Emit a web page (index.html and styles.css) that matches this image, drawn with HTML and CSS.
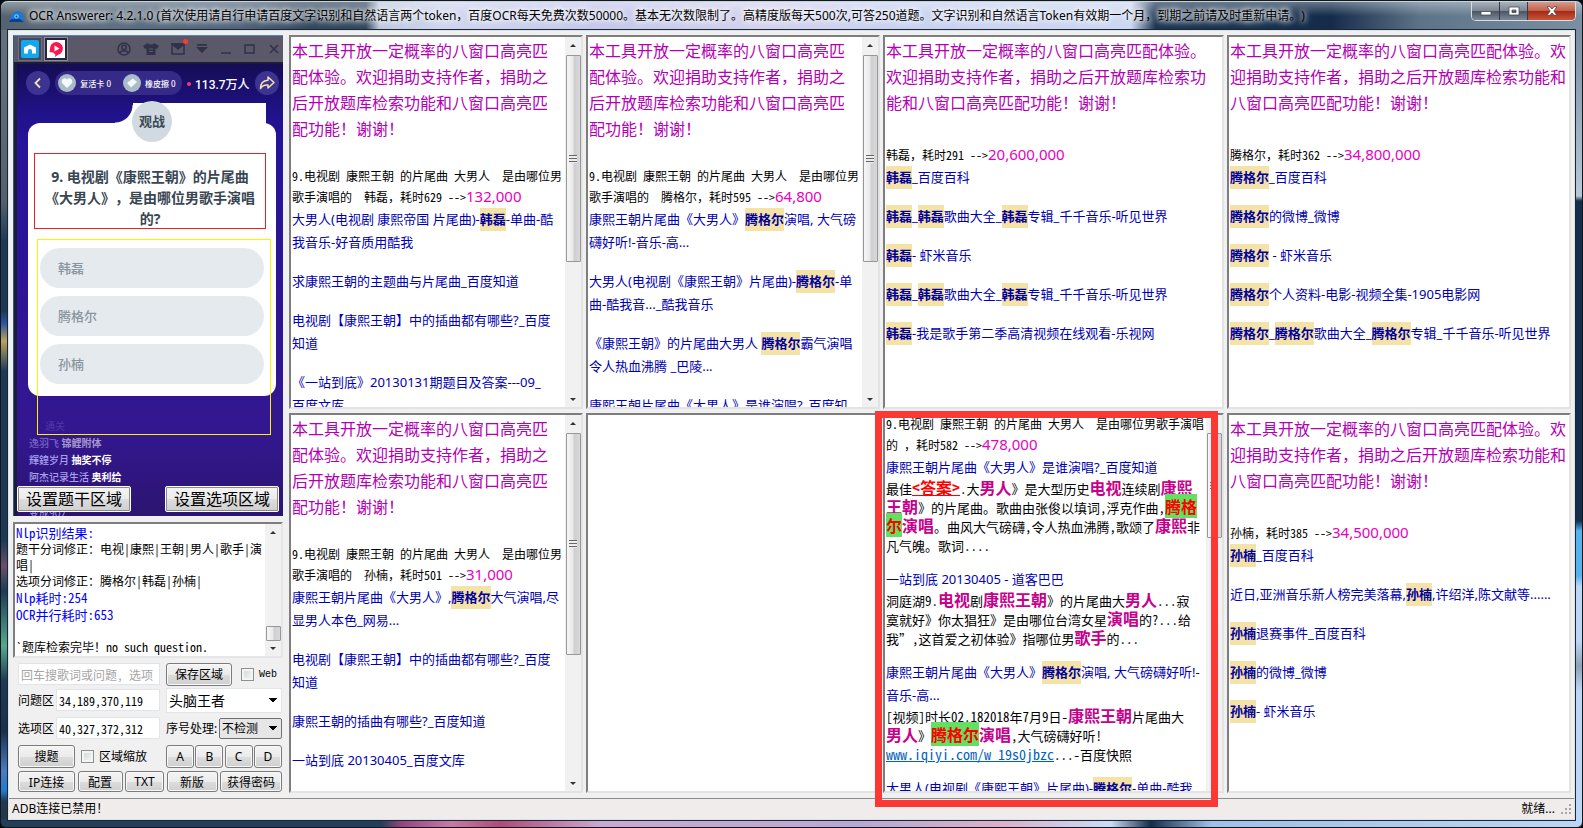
FILE: index.html
```html
<!DOCTYPE html>
<html lang="zh-CN">
<head>
<meta charset="utf-8">
<title>OCR Answerer</title>
<link rel="stylesheet" href="styles.css">
</head>
<body>
<div class="window">
  <header class="titlebar">
    <svg class="app-icon" viewBox="0 0 16 14" width="15" height="13"><path d="M1 9c0-2 1-3 3-4 1-3 3-4 5-4 3 0 5 2 6 5 1 4 0 7-2 7H4C2 13 1 11 1 9z" fill="#1a78d6"/><path d="M0 13c1-3 3-4 5-3 2-2 7-2 11 3z" fill="#0a3f94"/><circle cx="8" cy="7" r="2.4" fill="#63d4f6"/><circle cx="8" cy="7" r="1" fill="#063a80"/></svg>
    <h1 class="title">OCR Answerer: 4.2.1.0 (首次使用请自行申请百度文字识别和自然语言两个token，百度OCR每天免费次数50000。基本无次数限制了。高精度版每天500次,可答250道题。文字识别和自然语言Token有效期一个月，到期之前请及时重新申请。)</h1>
    <div class="caption-buttons">
      <button class="cap" aria-label="最小化"><svg viewBox="0 0 12 10" width="12" height="10"><rect x="1" y="5.500" width="10" height="3.500" fill="#fff" stroke="#444b58" stroke-width=".8"/></svg></button>
      <button class="cap" aria-label="最大化"><svg viewBox="0 0 12 10" width="12" height="10"><path d="M1 1h10v8H1zM4 4v2.500h4V4z" fill="#fff" fill-rule="evenodd" stroke="#444b58" stroke-width=".8"/></svg></button>
      <button class="cap cap-close" aria-label="关闭"><svg viewBox="0 0 12 10" width="12" height="10"><path d="M1 .7h3l2 2.300 2-2.300h3L7.800 5 11 9.300H8L6 7 4 9.300H1L4.200 5z" fill="#fff" stroke="#5a4048" stroke-width=".8"/></svg></button>
    </div>
  </header>

  <div class="client">
    <main class="workspace">
      <aside class="side">
        <section class="emulator">
          <div class="emu-bar">
            <span class="emu-tab"><svg viewBox="0 0 18 18" width="18" height="18"><rect width="18" height="18" rx="2" fill="#12a8f0"/><path d="M9 4.500l6 3v6h-4V11a2 2 0 0 0-4 0v2.500H3v-6z" fill="#fff"/></svg></span>
            <span class="emu-tab emu-tab-on"><svg viewBox="0 0 18 18" width="18" height="18"><rect width="18" height="18" fill="#fff"/><path d="M9.500 2a6.500 6.500 0 0 1 1.500 12.800L8 17l.4-2.500-2.400-2-3.500-.5.5-3A6.500 6.500 0 0 1 9.500 2z" fill="#f9174f"/><path d="M7.500 5.500l5 3-5 3z" fill="#fff"/></svg></span>
            <span class="emu-tools">
              <svg viewBox="0 0 14 14" width="14" height="14" class="line"><circle cx="7" cy="7" r="6"/><circle cx="7" cy="5.500" r="2.200"/><path d="M3 11c1-3 7-3 8 0"/></svg>
              <svg viewBox="0 0 16 14" width="16" height="14"><path d="M5 1c1 2 5 2 6 0l5 3-2 3-1.500-.7V13h-9V6.300L2 7 0 4z" fill="#2f3248"/><path d="M6 7h4M6 9.500h4" stroke="#5a5869"/></svg>
              <span class="mail"><svg viewBox="0 0 14 12" width="14" height="12" class="line"><rect x="1" y="1" width="12" height="10"/><path d="M1 1l6 5 6-5z" fill="#2f3248"/></svg></span>
              <svg viewBox="0 0 12 10" width="12" height="10"><path d="M1 0h10v1.800H1zM0 3h12L6 9z" fill="#2f3248"/></svg>
              <svg viewBox="0 0 12 12" width="12" height="12" class="line"><path d="M1 10h10"/></svg>
              <svg viewBox="0 0 12 12" width="12" height="12" class="line"><rect x="1" y="2" width="9" height="8"/></svg>
              <svg viewBox="0 0 12 12" width="12" height="12" class="line"><path d="M2 2l8 8M10 2l-8 8"/></svg>
            </span>
          </div>
          <div class="stage">
            <div class="hud">
              <span class="round"><svg viewBox="0 0 12 12" width="12" height="12"><path d="M8 1.500L3.500 6 8 10.500" fill="none" stroke="#f4e3b0" stroke-width="1.800"/></svg></span>
              <span class="pill">
                <span class="token"><svg viewBox="0 0 12 12" width="12" height="12"><path d="M6 11L1 6C-.5 3 3.500-.5 6 2.500 8.500-.5 12.500 3 11 6z" fill="#f3f8fa"/></svg></span><span>复活卡 0</span>
                <span class="token token-2"><svg viewBox="0 0 12 12" width="12" height="12"><path d="M1 6l6-4.500L11 5l-6 5.500z" fill="#f3f8fa"/></svg></span><span>橡皮擦 0</span>
              </span>
              <span class="viewers">113.7万人</span>
              <span class="round"><svg viewBox="0 0 16 14" width="16" height="14"><path d="M9 1l6 5.500L9 12V9C5 8.500 3 10 1.500 12.500 1.500 7 4 4.500 9 4.200z" fill="none" stroke="#f4e3b0" stroke-width="1.500" stroke-linejoin="round"/></svg></span>
            </div>
            <div class="card">
              <span class="card-curve"></span><span class="card-tab"></span><span class="watch">观战</span>
              <p class="question">9. 电视剧《康熙王朝》的片尾曲<br>《大男人》，是由哪位男歌手演唱<br>的?</p>
              <ul class="options"><li>韩磊</li><li>腾格尔</li><li>孙楠</li></ul>
              <span class="option-frame"></span>
            </div>
            <ul class="chat">
              <li class="faint"><span class="indent">通关</span></li>
              <li class="dim">逸羽飞 <b>锦鲤附体</b></li>
              <li>輝鍠岁月 <b>抽奖不停</b></li>
              <li>阿杰记录生活 <b>奥利给</b></li>
            </ul>
            <span class="chat-cut">变成907</span>
            <div class="area-buttons"><button class="btn-area">设置题干区域</button><button class="btn-area">设置选项区域</button></div>
          </div>
        </section>

        <section class="log">
          <div class="log-text">
            <p class="blue">Nlp识别结果:</p>
            <p>题干分词修正：电视|康熙|王朝|男人|歌手|演<br>唱|</p>
            <p>选项分词修正：腾格尔|韩磊|孙楠|</p>
            <p class="blue">Nlp耗时:254</p>
            <p class="blue">OCR并行耗时:653</p>
            <p class="log-last">`题库检索完毕！no such question.</p>
          </div>
          <div class="scroll scroll-log"><i class="up"></i><span class="thumb"></span><i class="down"></i></div>
        </section>

        <form class="controls">
          <div class="row row-search">
            <input class="field grow" type="text" placeholder="回车搜歌词或问题, 选项" aria-label="搜索">
            <div class="half"><button type="button" class="btn btn-save">保存区域</button><label class="check web"><input type="checkbox">Web</label></div>
          </div>
          <div class="row row-field">
            <div class="grow pair"><label for="q">问题区</label><input id="q" class="field" type="text" value="34,189,370,119"></div>
            <select class="combo half" aria-label="应用"><option>头脑王者</option></select>
          </div>
          <div class="row row-field">
            <div class="grow pair"><label for="o">选项区</label><input id="o" class="field" type="text" value="40,327,372,312"></div>
            <div class="half seq"><label for="s">序号处理:</label><select id="s" class="combo combo-btn"><option>不检测</option></select></div>
          </div>
          <div class="row row-search">
            <div class="grow zoomer"><button type="button" class="btn w57">搜题</button><label class="check"><input type="checkbox">区域缩放</label></div>
            <div class="half letters"><button type="button" class="btn">A</button><button type="button" class="btn">B</button><button type="button" class="btn">C</button><button type="button" class="btn">D</button></div>
          </div>
          <div class="row row-last">
            <button type="button" class="btn w57">IP连接</button><button type="button" class="btn w45">配置</button><button type="button" class="btn w39">TXT</button><button type="button" class="btn w51">新版</button><button type="button" class="btn w62">获得密码</button>
          </div>
        </form>
      </aside>

      <section class="panes">
        <article class="pane">
          <div class="text">
            <p class="notice">本工具开放一定概率的八窗口高亮匹<br>配体验。欢迎捐助支持作者，捐助之<br>后开放题库检索功能和八窗口高亮匹<br>配功能！谢谢！</p>
            <p class="ask">9.电视剧 康熙王朝 的片尾曲 大男人  是由哪位男</p>
            <p class="count">歌手演唱的  韩磊，耗时629 --&gt;<span>132,000</span></p>
            <p class="hit">大男人(电视剧 康熙帝国 片尾曲)-<mark>韩磊</mark>-单曲-酷<br>我音乐-好音质用酷我</p>
            <p class="hit">求康熙王朝的主题曲与片尾曲_百度知道</p>
            <p class="hit">电视剧【康熙王朝】中的插曲都有哪些?_百度<br>知道</p>
            <p class="hit">《一站到底》20130131期题目及答案---09_<br>百度文库</p>
          </div>
          <div class="scroll scroll-a"><i class="up"></i><span class="thumb grip"></span><i class="down"></i></div>
        </article>

        <article class="pane">
          <div class="text">
            <p class="notice">本工具开放一定概率的八窗口高亮匹<br>配体验。欢迎捐助支持作者，捐助之<br>后开放题库检索功能和八窗口高亮匹<br>配功能！谢谢！</p>
            <p class="ask">9.电视剧 康熙王朝 的片尾曲 大男人  是由哪位男</p>
            <p class="count">歌手演唱的  腾格尔，耗时595 --&gt;<span>64,800</span></p>
            <p class="hit">康熙王朝片尾曲《大男人》<mark>腾格尔</mark>演唱, 大气磅<br>礴好听!-音乐-高...</p>
            <p class="hit">大男人(电视剧《康熙王朝》片尾曲)-<mark>腾格尔</mark>-单<br>曲-酷我音..._酷我音乐</p>
            <p class="hit">《康熙王朝》的片尾曲大男人 <mark>腾格尔</mark>霸气演唱<br>令人热血沸腾 _巴陵...</p>
            <p class="hit">康熙王朝片尾曲《大男人》是谁演唱?_百度知</p>
          </div>
          <div class="scroll scroll-a"><i class="up"></i><span class="thumb grip"></span><i class="down"></i></div>
        </article>

        <article class="pane">
          <div class="text">
            <p class="notice">本工具开放一定概率的八窗口高亮匹配体验。<br>欢迎捐助支持作者，捐助之后开放题库检索功<br>能和八窗口高亮匹配功能！谢谢！</p>
            <p class="count">韩磊，耗时291 --&gt;<span>20,600,000</span></p>
            <p class="hit"><mark>韩磊</mark>_百度百科</p>
            <p class="hit"><mark>韩磊</mark>_<mark>韩磊</mark>歌曲大全_<mark>韩磊</mark>专辑_千千音乐-听见世界</p>
            <p class="hit"><mark>韩磊</mark>- 虾米音乐</p>
            <p class="hit"><mark>韩磊</mark>_<mark>韩磊</mark>歌曲大全_<mark>韩磊</mark>专辑_千千音乐-听见世界</p>
            <p class="hit"><mark>韩磊</mark>-我是歌手第二季高清视频在线观看-乐视网</p>
          </div>
        </article>

        <article class="pane">
          <div class="text">
            <p class="notice">本工具开放一定概率的八窗口高亮匹配体验。欢<br>迎捐助支持作者，捐助之后开放题库检索功能和<br>八窗口高亮匹配功能！谢谢！</p>
            <p class="count">腾格尔，耗时362 --&gt;<span>34,800,000</span></p>
            <p class="hit"><mark>腾格尔</mark>_百度百科</p>
            <p class="hit"><mark>腾格尔</mark>的微博_微博</p>
            <p class="hit"><mark>腾格尔</mark> - 虾米音乐</p>
            <p class="hit"><mark>腾格尔</mark>个人资料-电影-视频全集-1905电影网</p>
            <p class="hit"><mark>腾格尔</mark>_<mark>腾格尔</mark>歌曲大全_<mark>腾格尔</mark>专辑_千千音乐-听见世界</p>
          </div>
        </article>

        <article class="pane">
          <div class="text">
            <p class="notice">本工具开放一定概率的八窗口高亮匹<br>配体验。欢迎捐助支持作者，捐助之<br>后开放题库检索功能和八窗口高亮匹<br>配功能！谢谢！</p>
            <p class="ask">9.电视剧 康熙王朝 的片尾曲 大男人  是由哪位男</p>
            <p class="count">歌手演唱的  孙楠，耗时501 --&gt;<span>31,000</span></p>
            <p class="hit">康熙王朝片尾曲《大男人》,<mark>腾格尔</mark>大气演唱,尽<br>显男人本色_网易...</p>
            <p class="hit">电视剧【康熙王朝】中的插曲都有哪些?_百度<br>知道</p>
            <p class="hit">康熙王朝的插曲有哪些?_百度知道</p>
            <p class="hit">一站到底 20130405_百度文库</p>
          </div>
          <div class="scroll scroll-b"><i class="up"></i><span class="thumb grip"></span><i class="down"></i></div>
        </article>

        <article class="pane"></article>

        <div class="spot">
          <article class="pane">
            <div class="text">
              <p class="ask">9.电视剧 康熙王朝 的片尾曲 大男人  是由哪位男歌手演唱</p>
              <p class="count">的 ，耗时582 --&gt;<span>478,000</span></p>
              <p class="hit">康熙王朝片尾曲《大男人》是谁演唱?_百度知道</p>
              <p class="snip">最佳<b class="answer">&lt;答案&gt;</b>.大<b>男人</b>》是大型历史<b>电视</b>连续剧<b>康熙</b><br><b>王朝</b>》的片尾曲。歌曲由张俊以填词,浮克作曲,<b class="match">腾格</b><br><b class="match">尔</b><b>演唱</b>。曲风大气磅礴,令人热血沸腾,歌颂了<b>康熙</b>非</p>
              <p class="snip snip-end">凡气魄。歌词....</p>
              <p class="hit">一站到底 20130405 - 道客巴巴</p>
              <p class="snip snip-end">洞庭湖9.<b>电视</b>剧<b>康熙王朝</b>》的片尾曲大<b>男人</b>...寂<br>寞就好》你太猖狂》是由哪位台湾女星<b>演唱</b>的?...给<br>我”,这首爱之初体验》指哪位男<b>歌手</b>的...</p>
              <p class="hit">康熙王朝片尾曲《大男人》<mark>腾格尔</mark>演唱, 大气磅礴好听!-<br>音乐-高...</p>
              <p class="snip snip-end">[视频]时长02.182018年7月9日-<b>康熙王朝</b>片尾曲大<br><b>男人</b>》<b class="match">腾格尔</b><b>演唱</b>,大气磅礴好听!<br><a href="#">www.iqiyi.com/w_19s0jbzc</a>...-百度快照</p>
              <p class="hit">大男人(电视剧《康熙王朝》片尾曲)-<mark>腾格尔</mark>-单曲-酷我</p>
            </div>
            <div class="scroll scroll-c"><i class="up"></i><span class="thumb grip"></span><i class="down"></i></div>
          </article>
          <span class="red-frame"></span>
        </div>

        <article class="pane">
          <div class="text">
            <p class="notice">本工具开放一定概率的八窗口高亮匹配体验。欢<br>迎捐助支持作者，捐助之后开放题库检索功能和<br>八窗口高亮匹配功能！谢谢！</p>
            <p class="count">孙楠，耗时385 --&gt;<span>34,500,000</span></p>
            <p class="hit"><mark>孙楠</mark>_百度百科</p>
            <p class="hit">近日,亚洲音乐新人榜完美落幕,<mark>孙楠</mark>,许绍洋,陈文献等......</p>
            <p class="hit"><mark>孙楠</mark>退赛事件_百度百科</p>
            <p class="hit"><mark>孙楠</mark>的微博_微博</p>
            <p class="hit"><mark>孙楠</mark>- 虾米音乐</p>
          </div>
        </article>
      </section>
    </main>
    <footer class="status"><span>ADB连接已禁用！</span><span class="ready">就绪...</span>
      <svg viewBox="0 0 12 12" width="12" height="12"><path d="M9 1h2v2H9zM5 5h2v2H5zM9 5h2v2H9zM1 9h2v2H1zM5 9h2v2H5zM9 9h2v2H9z" fill="#a9a5a5"/></svg>
    </footer>
  </div>
</div>
</body>
</html>
```
FILE: styles.css
```css
* { box-sizing: border-box; }
html, body { height: 100%; }
body {
  margin: 0;
  background: #05080d;
  font-family: "Noto Sans", "Noto Sans CJK SC", sans-serif;
  font-size: 12px;
  color: #000;
  text-spacing-trim: space-all;
  overflow: hidden;
}
p, ul, h1 { margin: 0; padding: 0; list-style: none; font-weight: normal; }
button, input, select { font: inherit; color: inherit; margin: 0; }

.window {
  height: 100vh;
  display: flex;
  flex-direction: column;
  padding: 0 7px 7px;
  border: 1px solid #10161e;
  border-radius: 7px 7px 6px 6px;
  background:
    linear-gradient(90deg, #223e58 0 380px, #93447c 400px, #c77aa6 450px, #b04a78 500px, #c9a9d0 600px, #b8a8d4 860px, #dcb0c8 1000px, #c9dcf8 1110px, #122c4c 1150px, #9fc0e8 1210px, #bcd6f6 100%) bottom / 100% 8px no-repeat,
    linear-gradient(#7b8da0 30px, #b8c8d8 195px, #12304e 200px 520px, #55b4f0 530px 575px, #bcd6f6 585px 640px, #8ea2b8 665px, #bcd6f6 690px) right / 7px 100% no-repeat,
    linear-gradient(#64727f 30px, #53616e 200px, #1c3a55 240px, #1c3a55 310px, #2c52a0 322px, #b8a25c 340px, #1c3a55 370px 540px, #6a5068 565px, #1c3a55 590px, #56a88c 645px, #1c3a55 680px, #18304e 730px, #4a7cc0 770px, #1f7ad0 790px, #23384f 800px) left / 7px 100% no-repeat,
    #23384f;
}
.titlebar {
  height: 29px;
  flex: none;
  display: flex;
  align-items: center;
  margin: 0 -7px;
  padding-left: 8px;
  gap: 5px;
  border-radius: 7px 7px 0 0;
  border-top: 1px solid #c6d2dc;
  background:
    linear-gradient(rgba(255,255,255,.35), rgba(255,255,255,0) 14px),
    linear-gradient(90deg, #55636f, #5d6f80 100px, #50637a 240px, #31465c 310px, #31465c 365px, #bcc8dc 378px, #d0d6ee 440px, #c4c8ea 600px, #d4d2ee 760px, #c8d2f0 900px, #cdd8f2 1130px, #1a3350 1155px, #142c4a 1330px, #5d7488 1420px, #7b8fa2 100%);
}
.app-icon { flex: none; }
.title {
  flex: 1;
  font-size: 12px;
  line-height: 20px;
  white-space: nowrap;
  text-shadow: 0 0 5px #fff, 0 0 7px #fff, 0 0 10px rgba(255,255,255,.8);
}
.caption-buttons {
  flex: none;
  display: flex;
  align-self: flex-start;
  margin-right: 6px;
  border: 1px solid #d6dde4;
  border-top: 0;
  border-radius: 0 0 5px 5px;
  overflow: hidden;
}
.cap {
  display: grid;
  place-items: center;
  width: 28px;
  height: 18px;
  padding: 0;
  border: 0;
  border-right: 1px solid #333d48;
  background: linear-gradient(#a9b1ba, #7d8895 48%, #4a5562 50%, #7b8896);
}
.cap-close { width: 47px; border-right: 0; background: linear-gradient(#d79a8c, #c2604c 48%, #a32814 50%, #c9553a); }

.client {
  flex: 1;
  min-height: 0;
  display: flex;
  flex-direction: column;
  background: #f0f0f0;
  border: 1px solid #d8e2ea;
  outline: 1px solid #1c2732;
}
.workspace {
  flex: 1;
  min-height: 0;
  display: flex;
  gap: 6px;
  padding: 4px 3px 5px 4px;
}
.side { width: 270px; flex: none; display: flex; flex-direction: column; }

/* emulator preview */
.emulator { flex: none; display: flex; flex-direction: column; border-left: 1px solid #33597f; border-top: 1px solid #4f86c4; background: #1d1c38; }
.emu-bar { display: flex; align-items: center; height: 26px; padding: 0 3px 0 4px; background: #5a5869; }
.emu-tab { width: 24px; height: 24px; display: grid; place-items: center; background: #44485c; border: 1px solid #6d7085; }
.emu-tab-on { background: #23273f; border-color: #8d8fa0; margin-left: 2px; }
.emu-tools { display: flex; flex: 1; align-items: center; justify-content: space-between; margin-left: 49px; }
.line { fill: none; stroke: #2f3248; stroke-width: 1.500; }
.mail { position: relative; display: flex; }
.mail::after { content: ""; position: absolute; right: -3px; top: -4px; width: 5px; height: 5px; border-radius: 50%; background: #ff3b30; }
.stage {
  position: relative;
  margin: 2px 0 0 3px;
  padding-top: 7px;
  padding-bottom: 4px;
  overflow: hidden;
  background: linear-gradient(#150d54, #20128a 50px, #26149a 80px, #2f1694 300px, #33178f 370px, #2c1470);
}
.hud { display: flex; align-items: center; justify-content: space-between; height: 24px; padding: 0 4px 0 9px; color: #fff; }
.round { width: 24px; height: 24px; border-radius: 50%; display: grid; place-items: center; background: #3d3390; }
.pill { display: flex; align-items: center; gap: 4px; height: 24px; padding: 0 6px 0 3px; border-radius: 12px; background: #352a88; font-size: 8px; font-weight: 500; }
.token { width: 18px; height: 18px; border-radius: 50%; display: grid; place-items: center; background: #a9bcc8; }
.token-2 { margin-left: 8px; }
.viewers { font-size: 12px; font-weight: 500; font-family: Roboto, "Noto Sans CJK SC", sans-serif; }
.viewers::before { content: ""; display: inline-block; width: 4px; height: 4px; border-radius: 50%; background: #f03a78; margin-right: 4px; vertical-align: 3px; }
.card { position: relative; margin: 28px 7px 0 11px; padding: 30px 10px 12px 6px; border-radius: 12px; background: #fff; }
.card-tab { position: absolute; left: 105px; right: 10px; top: -20px; height: 21px; background: #fff; }
.card-curve { position: absolute; left: 87px; top: -18px; width: 18px; height: 19px; background: radial-gradient(circle at 0 0, transparent 17px, #fff 18px); }
.watch { position: absolute; left: 104px; top: -22px; width: 40px; height: 41px; border-radius: 50%; background: #d2dae1; color: #3b4954; font-size: 13px; font-weight: bold; line-height: 41px; text-align: center; }
.question { border: 1px solid #f02020; padding: 12px 0 0; height: 76px; font-size: 14px; line-height: 21px; font-weight: bold; color: #384652; text-align: center; white-space: nowrap; }
.options { margin: 19px 2px 0 6px; display: grid; gap: 8px; }
.options li { height: 40px; border-radius: 20px; padding-left: 18px; line-height: 40px; background: #e4eaee; color: #8b959d; font-size: 13px; font-weight: 500; }
.option-frame { position: absolute; left: 9px; right: 5px; top: 116px; bottom: -39px; border: 1px solid #fff200; }
.chat { margin: 22px 0 0 12px; font-size: 10px; line-height: 17px; color: #a9a0f0; font-weight: 500; }
.chat b { color: #fff; }
.chat .dim { opacity: .55; }
.chat .faint { opacity: .2; }
.indent { margin-left: 16px; }
.chat-cut { position: absolute; left: 12px; bottom: -4px; font-size: 10px; line-height: 14px; color: #a9a0f0; }
.area-buttons { position: relative; display: flex; justify-content: space-between; padding-right: 4px; }
.btn-area { width: 114px; height: 26px; padding: 0; border: 1px solid #fff; outline: 1px solid #8a8a8a; outline-offset: -2px; border-radius: 2px; background: linear-gradient(#f4f4f4, #ebebeb 50%, #dddddd 51%, #cfcfcf); font-size: 16px; line-height: 22px; }

/* recognition log */
.log { flex: 1; min-height: 0; display: flex; margin-top: 6px; background: #fff; border: 2px solid; border-color: #7e7e7e #e6e6e6 #e6e6e6 #7e7e7e; }
.log-text { flex: 1; min-width: 0; padding: 0 0 0 1px; font-family: "Noto Sans Mono CJK SC", "Liberation Sans", "Noto Sans CJK SC", monospace; font-size: 12px; line-height: 16px; white-space: nowrap; overflow: hidden; }
.log-text .blue { color: #0000ff; font-size: 13px; line-height: 17px; }
.log-text .log-last { margin-top: 16px; }

/* scroll bars */
.scroll { width: 16px; flex: none; display: flex; flex-direction: column; align-items: center; background: #f1f1f1; }
.scroll i { border: 3px solid transparent; flex: none; width: 0; height: 0; }
.scroll .up { border-bottom-color: #333; margin: 4px 0 8px; }
.scroll .down { border-top-color: #333; margin: auto 0 5px; }
.thumb { width: 15px; border: 1px solid #979797; border-radius: 1px; background: linear-gradient(90deg, #f6f6f6, #e9e9ea 45%, #cfcfd2 55%, #d8d8da); display: grid; place-items: center; }
.grip::after { content: ""; width: 8px; height: 8px; background: repeating-linear-gradient(#666 0 1px, #eee 1px 3px); }
.scroll-a .thumb { height: 56%; }
.scroll-b .thumb { height: 59%; }
.scroll-c .thumb { height: 28%; }
.scroll .down { margin-bottom: 3px; }
.scroll-log .thumb { height: 15px; margin-top: auto; }
.scroll-log .down { margin-top: 6px; }

/* control form */
.controls { flex: none; padding: 4px 1px 0 5px; }
.row { display: flex; gap: 6px; align-items: center; }
.row-search { height: 24px; }
.row-field { height: 28px; }
.controls .row:nth-child(4) { margin-top: 2px; }
.row-last { height: 23px; gap: 2px; margin-top: 2px; justify-content: space-between; }
.grow { flex: 1; min-width: 0; }
.half { width: 116px; flex: none; }
.row-search .half, .seq, .zoomer, .pair { display: flex; align-items: center; justify-content: space-between; }
.pair label, .seq label { font-size: 12px; white-space: nowrap; }
.field { height: 22px; min-width: 0; padding: 0 2px; border: 1px solid #e1e5ea; background: #fff; font-family: "Noto Sans Mono CJK SC", "Liberation Sans", "Noto Sans CJK SC", sans-serif; font-size: 12px; }
.field::placeholder { color: #a5a5a5; }
.pair .field { width: 104px; }
.combo {
  height: 25px;
  appearance: none;
  border: 1px solid #e1e5ea;
  border-radius: 0;
  padding: 0 2px;
  font-size: 14px;
  background-color: #fff;
  background-image: linear-gradient(to bottom left, #000 50%, transparent 52%), linear-gradient(to bottom right, #000 50%, transparent 52%);
  background-position: right 8px center, right 4px center;
  background-size: 4px 4px;
  background-repeat: no-repeat;
}
.combo-btn { width: 63px; height: 21px; font-size: 12px; border: 1px solid #707070; border-radius: 2px; background-color: #e6e6e6; }
.btn { height: 23px; padding: 0; border: 1px solid #7b7b7b; border-radius: 3px; background: linear-gradient(#f4f4f4, #ebebeb 50%, #dddddd 51%, #cfcfcf); box-shadow: inset 0 0 0 1px #f8f8f8; font-size: 12px; white-space: nowrap; }
.btn-save { width: 66px; }
.w57 { width: 57px; }
.w45 { width: 45px; }
.w39 { width: 39px; }
.w51 { width: 51px; }
.w62 { width: 62px; }
.row-last .btn { height: 21px; }
.letters .btn { width: 28px; }
.check { display: flex; align-items: center; gap: 5px; white-space: nowrap; }
.check input { appearance: none; width: 13px; height: 13px; border: 1px solid #8e8f8f; background: linear-gradient(135deg, #cfd4d8, #f8f8f8); box-shadow: inset 0 0 0 2px #f4f4f4; }
.zoomer { padding-right: 13px; }
.web { font-family: "Liberation Mono", monospace; font-size: 10px; padding-right: 5px; }

/* search panes */
.panes { flex: 1; min-width: 0; display: grid; grid-template: 374fr 380fr / 294fr 294fr 341fr 344fr; gap: 4px 3px; }
.pane { display: flex; min-width: 0; min-height: 0; overflow: hidden; background: #fff; border: 2px solid; border-color: #7e7e7e #e3e3e3 #e3e3e3 #7e7e7e; }
.text { flex: 1; min-width: 0; padding: 1px 0 0 1px; overflow: hidden; }
.text p { white-space: pre; }
.text .notice { margin-bottom: 26px; font-size: 16px; line-height: 26px; color: #b400b4; }
.ask, .count { font-family: "Noto Sans Mono CJK SC", "Liberation Sans", "Noto Sans CJK SC", monospace; font-size: 12px; line-height: 16px; }
.count { line-height: 24px; height: 24px; }
.count span { font-family: "Noto Sans", sans-serif; font-size: 15px; color: #e600c0; }
.text .hit { font-size: 13px; line-height: 23px; color: #0000b4; margin-bottom: 16px; }
mark { display: inline-block; height: 23px; background: #f5e2a6; color: #00009c; font-weight: bold; vertical-align: top; }
.spot { position: relative; display: grid; min-width: 0; min-height: 0; }
.spot .text .hit { margin-bottom: 0; }
.red-frame { position: absolute; left: -8px; right: 6px; top: -2px; bottom: -14px; border: 7px solid #fc3835; }
.snip { font-family: "Noto Sans Mono CJK SC", "Liberation Sans", "Noto Sans CJK SC", monospace; font-size: 13px; line-height: 19px; }
.snip b { font-size: 16px; line-height: 1px; color: #c8008c; }
.snip .answer { color: #f00; text-decoration: underline; }
.snip .match { background: #62e062; color: #f00; }
.text .snip-end { margin-bottom: 13px; }
.snip a { color: #0060c0; font-size: 14px; line-height: 1px; }

.status { flex: none; height: 21px; display: flex; align-items: center; padding: 0 2px 0 3px; background: #f0eceb; border-top: 1px solid #8c8c8c; line-height: 20px; }
.ready { margin-left: auto; margin-right: 5px; }
```
